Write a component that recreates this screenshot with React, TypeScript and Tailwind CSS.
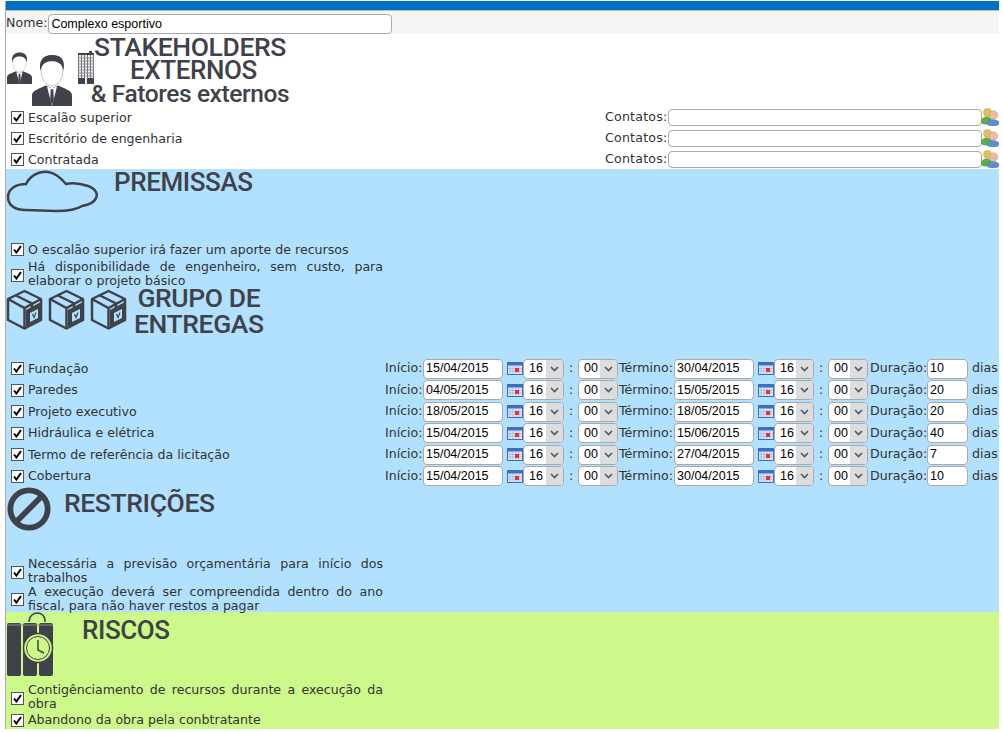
const bodyFont = "font-['DejaVu_Sans',sans-serif]";

const PersonIcon = ({ w, h }: { w: number; h: number }) => (
  <svg width={w} height={h} viewBox="0 0 40 53" className="block shrink-0" preserveAspectRatio="none">
    <path d="M0 53 V42 C0 37 8 35 14 32 L20 35 L26 32 C32 35 40 37 40 42 V53 Z" fill="#3f4249" />
    <path d="M15 33 L20 53 L25 33 L20 35 Z" fill="#fff" />
    <path d="M18.7 36 H21.3 L21.8 47 L20 52 L18.2 47 Z" fill="#3f4249" />
    <ellipse cx="20" cy="17" rx="11" ry="15.5" fill="#fff" stroke="#b5b5b5" strokeWidth="0.8" />
    <path d="M8.5 17 C6 4 14 1 20 1 C27 1 34 4 31.5 17 C30 10 26 7.5 20 7.5 C14 7.5 10 10 8.5 17 Z" fill="#3f4249" />
  </svg>
);

const BuildingIcon = () => (
  <svg width="18" height="33" viewBox="0 0 18 33" className="block shrink-0">
    <rect x="1" y="2" width="16" height="31" fill="#f0f0f0" />
    <path d="M1 2H12V0H15V2H17V4H1Z" fill="#3f4249" />
    <path d="M1.5 4V29M4.5 4V29M7.5 4V29M10.5 4V29M13.5 4V29M16.5 4V29" stroke="#6d7076" strokeWidth="1" />
    <path d="M1 7H17M1 10H17M1 13H17M1 16H17M1 19H17M1 22H17M1 25H17" stroke="#8d9096" strokeWidth="1" />
    <rect x="1" y="27" width="7" height="6" fill="#3f4249" />
    <rect x="10" y="27" width="7" height="6" fill="#3f4249" />
  </svg>
);

const CloudIcon = () => (
  <svg width="94" height="44" viewBox="0 0 94 44" className="block shrink-0">
    <path
      d="M20 40 C6 40 2 33 2 27 C2 19 10 14 20 14 C24 6 32 1 42 2 C50 3 55 8 60 14 C68 12 76 14 82 16 C90 19 92 24 90 28 C88 33 82 35 76 36 C70 40 60 41 50 41 Z"
      fill="none"
      stroke="#3f4249"
      strokeWidth="2.5"
    />
  </svg>
);

const BoxIcon = () => (
  <svg width="37" height="41" viewBox="0 0 37 41" className="block shrink-0">
    <path d="M18.5 2 L35 10 V31 L18.5 39.5 L2 31 V10 Z" fill="none" stroke="#3f4249" strokeWidth="2.5" strokeLinejoin="round" />
    <path d="M2 10 L18.5 19 L35 10 M18.5 19 V39.5" fill="none" stroke="#3f4249" strokeWidth="2.5" />
    <path d="M9 6 L26 14.5 V20" fill="none" stroke="#3f4249" strokeWidth="2.5" />
    <path d="M20 21 L35 13 V30 L20 38 Z" fill="#3f4249" />
    <path d="M24 24 L32 20 V29 L24 33 Z" fill="#b2e0ff" />
    <path d="M26.5 25 L28 28.5 L30 23.5" fill="none" stroke="#3f4249" strokeWidth="1.2" />
  </svg>
);

const NoIcon = () => (
  <svg width="46" height="44" viewBox="0 0 46 46" className="block shrink-0">
    <circle cx="23" cy="23" r="19.5" fill="none" stroke="#3f4249" strokeWidth="6" />
    <path d="M10 36 L36 10" stroke="#3f4249" strokeWidth="6" />
  </svg>
);

const BombIcon = () => (
  <svg width="48" height="66" viewBox="0 0 48 66" className="block shrink-0">
    <path d="M23 10 C23 -2 40 -2 39 10" fill="none" stroke="#3f4249" strokeWidth="1.5" />
    <rect x="1" y="11" width="14" height="53" rx="2" fill="#3f4249" />
    <rect x="17" y="11" width="14" height="53" rx="2" fill="#3f4249" />
    <rect x="33" y="11" width="14" height="53" rx="2" fill="#3f4249" />
    <path d="M1 13 H47" stroke="#8a8d92" strokeWidth="1" />
    <circle cx="32" cy="36" r="14.5" fill="#cdf98a" stroke="#3f4249" strokeWidth="1.5" />
    <circle cx="32" cy="36" r="11.5" fill="none" stroke="#3f4249" strokeWidth="1" />
    <path d="M32 28 V38 L38 41" fill="none" stroke="#3f4249" strokeWidth="1.5" />
  </svg>
);

const ContactsIcon = () => (
  <svg width="18" height="18" viewBox="0 0 18 18" className="-ml-px block shrink-0">
    <circle cx="6.5" cy="4.5" r="4" fill="#e2c25a" stroke="#b59a3c" strokeWidth="0.5" />
    <path d="M0.5 13 C0.5 8.5 8 7.5 10 11 V16 H3 C1.5 16 0.5 15 0.5 13 Z" fill="#5fb040" stroke="#3f8a2a" strokeWidth="0.5" />
    <circle cx="12.5" cy="7" r="4.2" fill="#eeb9a2" stroke="#c8927a" strokeWidth="0.5" />
    <path d="M6 15 C6 10.5 18 10.5 18 15 C18 17 16 18 12 18 C8 18 6 17 6 15 Z" fill="#5a90d0" stroke="#3f70b0" strokeWidth="0.5" />
  </svg>
);

const CalendarIcon = () => (
  <svg width="16" height="13" viewBox="0 0 16 13" className="block shrink-0">
    <rect x="0.5" y="0.5" width="15" height="12" fill="#dfe7f6" stroke="#3a6fc8" />
    <rect x="1" y="1" width="14" height="2.5" fill="#3a6fc8" />
    <path d="M3 4V12M6 4V12M9 4V12M12 4V12M1 6.5H15M1 9H15" stroke="#9ab4dc" strokeWidth="0.7" />
    <rect x="8" y="6" width="4" height="4" fill="#e8312a" />
  </svg>
);

const Check = ({ className = '' }: { className?: string }) => (
  <span className={`flex h-[13px] w-[13px] shrink-0 items-center justify-center border border-[#555] bg-white ${className}`}>
    <svg width="9" height="9" viewBox="0 0 9 9">
      <path d="M1 4.5 L3.4 7.5 L8 1" fill="none" stroke="#000" strokeWidth="2" />
    </svg>
  </span>
);

const CheckItem = ({ text, height = 'h-[21px]' }: { text: string; height?: string }) => (
  <div className={`flex items-center gap-[4px] pl-[5px] text-[12.6px] leading-[14px] text-[#333] ${height}`}>
    <Check />
    <span className="whitespace-nowrap">{text}</span>
  </div>
);

// justified two line label, same width as the left column
const CheckLong = ({ text, height = 'h-[28px]' }: { text: string; height?: string }) => (
  <div className={`flex w-[377px] items-center gap-[4px] pl-[5px] text-[12.6px] leading-[14px] text-[#333] ${height}`}>
    <Check className="mt-[2px]" />
    <span className="text-justify">{text}</span>
  </div>
);

const Title = ({ children, className = '' }: { children: React.ReactNode; className?: string }) => (
  <div className={`shrink-0 whitespace-nowrap font-['Roboto',sans-serif] font-medium tracking-[-0.4px] text-[#3f4249] ${className}`}>{children}</div>
);

const Field = ({ value, width }: { value: string; width: string }) => (
  <span className={`flex shrink-0 items-center rounded-[4px] border border-[#a9a9a9] bg-white pl-[2px] font-['Liberation_Sans',sans-serif] text-[12.5px] text-black ${width}`}>
    {value}
  </span>
);

const Dropdown = ({ value, width }: { value: string; width: string }) => (
  <span className={`flex h-[20px] shrink-0 items-center justify-between rounded-[4px] border border-[#a9a9a9] bg-white pl-[5px] font-['Liberation_Sans',sans-serif] text-[12.5px] text-black ${width}`}>
    {value}
    <span className="flex h-full w-[17px] items-center justify-center rounded-r-[3px] bg-[#ddd]">
      <svg width="9" height="6" viewBox="0 0 9 6">
        <path d="M1 1 L4.5 4.5 L8 1" fill="none" stroke="#4a5a6a" strokeWidth="1.6" />
      </svg>
    </span>
  </span>
);

const DateTime = ({ date, firstWidth }: { date: string; firstWidth: string }) => (
  <>
    <Field value={date} width="h-[20px] w-[80px]" />
    <span className="ml-[4px] shrink-0"><CalendarIcon /></span>
    <span className="shrink-0"><Dropdown value="16" width={firstWidth} /></span>
    <span className="w-[14px] shrink-0 text-center">:</span>
    <Dropdown value="00" width="w-[40px]" />
  </>
);

const deliveries = [
  { name: 'Fundação', start: '15/04/2015', end: '30/04/2015', days: '10' },
  { name: 'Paredes', start: '04/05/2015', end: '15/05/2015', days: '20' },
  { name: 'Projeto executivo', start: '18/05/2015', end: '18/05/2015', days: '20' },
  { name: 'Hidráulica e elétrica', start: '15/04/2015', end: '15/06/2015', days: '40' },
  { name: 'Termo de referência da licitação', start: '15/04/2015', end: '27/04/2015', days: '7' },
  { name: 'Cobertura', start: '15/04/2015', end: '30/04/2015', days: '10' },
];

const stakeholders = ['Escalão superior', 'Escritório de engenharia', 'Contratada'];

export default function App() {
  return (
    <div className={`h-[732px] overflow-hidden bg-white pt-px pl-[5px] pr-[4px] ${bodyFont}`}>
      <div className="border-l border-[#aaa]">
        <div className="h-[10px] border-b border-[#bbb] bg-[#006fc4]" />
        <div className="flex h-[23px] items-end gap-[1px] bg-[#f5f5f5] text-[12.6px] text-[#333]">
          <span className="mb-[1px]">Nome:</span>
          <Field value="Complexo esportivo" width="h-[20px] w-[344px]" />
        </div>

        {/* Stakeholders */}
        <div className="flex h-[72px]">
          <div className="flex w-[84px] shrink-0 items-start pl-px pt-[18px]">
            <PersonIcon w={25} h={32} />
            <span className="mt-[2px]"><PersonIcon w={40} h={52} /></span>
            <span className="ml-[5px] -mt-px"><BuildingIcon /></span>
          </div>
          <Title className="w-[200px] text-center">
            <div className="mt-[1px] text-[26.5px] leading-[23px]">STAKEHOLDERS</div>
            <div className="pl-[7px] text-[26px] leading-[24px]">EXTERNOS</div>
            <div className="text-[24.5px] leading-[24px]">&amp; Fatores externos</div>
          </Title>
        </div>
        {stakeholders.map((name) => (
          <div key={name} className="flex h-[21px] items-center justify-between pt-[2px]">
            <CheckItem text={name} />
            <div className="flex items-center text-[12.6px] tracking-[0.2px] text-[#333]">
              <span className="w-[63px] shrink-0">Contatos:</span>
              <Field value="" width="h-[17px] w-[314px]" />
              <ContactsIcon />
            </div>
          </div>
        ))}

        {/* Blue block */}
        <div className="bg-[#b2e0ff]">
          <div className="flex h-[70px] pt-px">
            <CloudIcon />
            <Title className="ml-[14px] text-[26px] leading-[24px]">PREMISSAS</Title>
          </div>
          <CheckItem text="O escalão superior irá fazer um aporte de recursos" />
          <CheckLong text="Há disponibilidade de engenheiro, sem custo, para elaborar o projeto básico" />

          <div className="flex h-[70px] gap-[5px] pt-[1px]">
            <BoxIcon />
            <BoxIcon />
            <BoxIcon />
            <Title className="ml-[2px] -mt-[4px] text-center text-[26.5px] leading-[26px]">
              <div>GRUPO DE</div>
              <div>ENTREGAS</div>
            </Title>
          </div>

          {deliveries.map((row) => (
            <div key={row.name} className="flex h-[21.5px] items-center whitespace-nowrap text-[12.6px] text-[#333]">
              <div className="w-[379px] shrink-0"><CheckItem text={row.name} /></div>
              <span className="w-[38px] shrink-0">Início:</span>
              <DateTime date={row.start} firstWidth="w-[41px]" />
              <span className="w-[56px] shrink-0 pl-px">Término:</span>
              <DateTime date={row.end} firstWidth="w-[40px]" />
              <span className="w-[59px] shrink-0 pl-[2px]">Duração:</span>
              <Field value={row.days} width="h-[20px] w-[41px]" />
              <span className="ml-[4px] shrink-0">dias</span>
            </div>
          ))}

          <div className="flex h-[70px]">
            <NoIcon />
            <Title className="ml-[12px] mt-[3px] text-[26.5px] leading-[26px]">RESTRIÇÕES</Title>
          </div>
          <CheckLong text="Necessária a previsão orçamentária para início dos trabalhos" />
          <CheckLong text="A execução deverá ser compreendida dentro do ano fiscal, para não haver restos a pagar" height="h-[27px]" />
        </div>

        {/* Green block */}
        <div className="bg-[#cdf98a]">
          <div className="flex h-[71px]">
            <BombIcon />
            <Title className="ml-[28px] text-[26px] leading-[36px]">RISCOS</Title>
          </div>
          <CheckLong text="Contigênciamento de recursos durante a execução da obra" />
          <CheckItem text="Abandono da obra pela conbtratante" height="h-[18px]" />
        </div>
      </div>
    </div>
  );
}
